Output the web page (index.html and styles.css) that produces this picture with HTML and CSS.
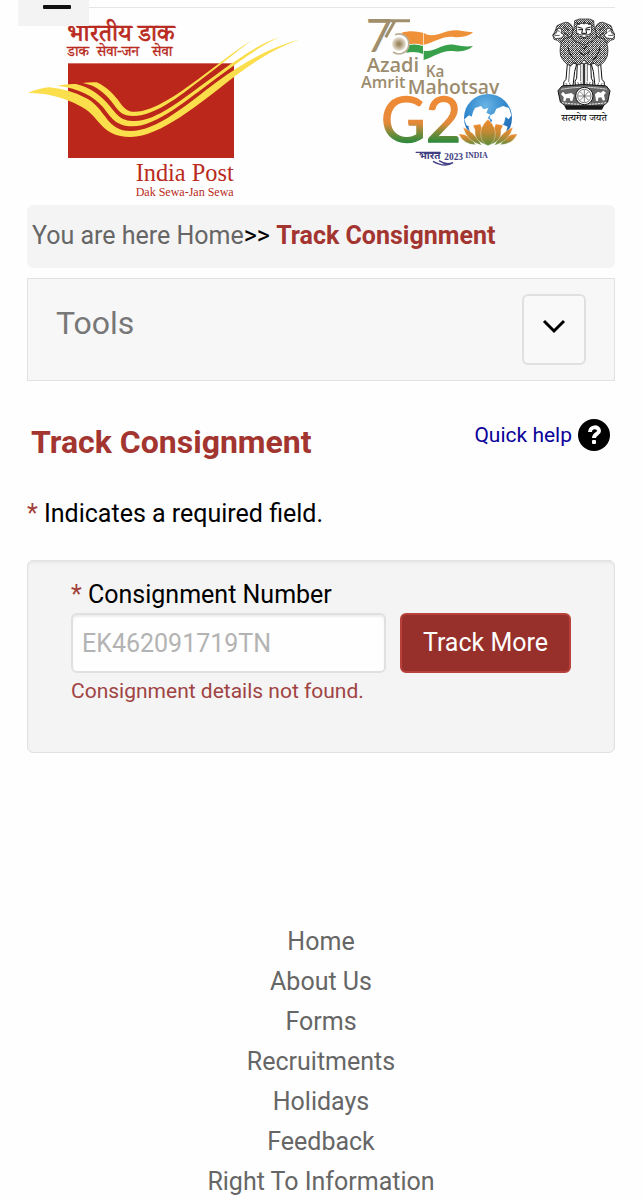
FILE: index.html
```html
<!DOCTYPE html>
<html lang="en">
<head>
<meta charset="utf-8">
<meta name="viewport" content="width=device-width, initial-scale=1">
<title>Track Consignment - India Post</title>
<link rel="stylesheet" href="styles.css">
</head>
<body>
<div class="page">
  <button class="menu-button" type="button" aria-label="Open menu"><span class="menu-bar"></span></button>

  <header class="site-header">
    <a class="logo" href="#" aria-label="India Post">
      <svg class="logo-post" viewBox="81 48 819 552" role="img" aria-label="India Post">
        <g class="deva" fill="#b92a20" stroke="#b92a20">
          <text x="202" y="124" font-size="74" stroke-width="2">भारतीय डाक</text>
          <text x="202" y="169" font-size="44" stroke-width="1">डाक</text>
          <text x="290" y="169" font-size="44" stroke-width="1">सेवा-जन</text>
          <text x="456" y="169" font-size="44" stroke-width="1">सेवा</text>
        </g>
        <rect x="204" y="190" width="498" height="284" fill="#bb271a"/>
        <g fill="#fbde4b">
          <path d="M84 278Q120 264 148 262Q210 268 262 296C318 328 320 393 392 393C470 393 560 314 650 246C740 180 820 140 900 118C820 148 760 186 690 240C600 310 480 411 392 411C300 411 300 346 240 318C190 290 140 280 84 278Z"/>
          <path d="M172 257Q200 251 228 252C270 262 302 286 326 314C350 342 360 363 404 363C470 363 550 294 640 230C720 170 790 126 838 112C780 138 720 182 650 234C560 300 470 379 398 379C346 379 332 350 308 320C280 288 240 266 172 257Z"/>
          <path d="M248 249Q268 246 290 247C320 260 342 284 360 308C376 330 386 335 404 335C462 335 540 278 620 218C680 174 730 134 758 120C720 146 680 180 628 220C550 280 470 348 400 348C368 348 356 334 342 314C318 282 290 256 248 249Z"/>
        </g>
        <g class="serif" fill="#b92a20">
          <text x="407" y="543" font-size="73">India Post</text>
          <text x="407" y="587" font-size="36">Dak Sewa-Jan Sewa</text>
        </g>
      </svg>
    </a>
    <div class="partner-logos">
      <svg class="logo-g20" viewBox="54 48 486 456" role="img" aria-label="Azadi Ka Amrit Mahotsav, G20">
        <defs>
          <linearGradient id="tricolour" gradientUnits="userSpaceOnUse" x1="0" y1="290" x2="0" y2="426">
            <stop offset="0" stop-color="#ef8a35"/><stop offset=".58" stop-color="#e58a3a"/><stop offset=".82" stop-color="#6f8b3a"/><stop offset="1" stop-color="#2f8a3c"/>
          </linearGradient>
          <linearGradient id="petal" x1="0" y1="0" x2="0" y2="1">
            <stop offset="0" stop-color="#f08a2e"/><stop offset=".45" stop-color="#c58a34"/><stop offset="1" stop-color="#5b8b3a"/>
          </linearGradient>
          <radialGradient id="globe" cx=".45" cy=".25" r=".8">
            <stop offset="0" stop-color="#69b4e4"/><stop offset=".55" stop-color="#2e86cc"/><stop offset="1" stop-color="#1d5ea8"/>
          </radialGradient>
          <radialGradient id="hub"><stop offset="0" stop-color="#927d53"/><stop offset=".35" stop-color="#ab9a78"/><stop offset="1" stop-color="#ece6dc"/></radialGradient>
        </defs>
        <text class="lato" x="80" y="157" font-size="137" fill="#a08e6c">7</text>
        <path d="M148 62H213M167 64L140 112" fill="none" stroke="#a08e6c" stroke-width="9"/>
        <path d="M188 98C206 92 230 92 252 98V135C232 130 218 130 206 134Z" fill="#ef9139"/>
        <path d="M206 136Q230 130 252 138V162Q230 152 202 158Z" fill="#38a04b"/>
        <path d="M254 98C286 120 318 86 356 91Q382 95 402 97C388 110 366 113 345 111C310 106 282 130 254 134Z" fill="#ef9139"/>
        <path d="M254 152C286 158 308 130 345 134Q380 142 402 138C388 152 366 157 340 153C310 150 288 168 254 180Z" fill="#38a04b"/>
        <circle cx="180" cy="132" r="31" fill="#fff"/>
        <circle cx="180" cy="132" r="21" fill="url(#hub)"/>
        <path d="M168 104A30 30 0 1 1 162 156" fill="none" stroke="#bbae94" stroke-width="5"/>
        <g class="azadi" fill="#9c8c6e">
          <text x="83" y="216" font-size="60">Azadi</text>
          <text x="260" y="231" font-size="46">Ka</text>
          <text x="66" y="264" font-size="49">Amrit</text>
          <text x="206" y="281" font-size="58">Mahotsav</text>
        </g>
        <text class="lato" x="126" y="425" font-size="184" fill="url(#tricolour)" stroke="url(#tricolour)" stroke-width="4">G2</text>
        <circle cx="447" cy="354" r="72" fill="url(#globe)"/>
        <g fill="#fff">
          <path d="M408 324l18-6 8 10 14-4-6 14 12 6-8 10 8 6-10 14-40 10-22-8-6-18 14-12 8 4 4-14Z"/>
          <path d="M454 346l12-6 6-14 20-8 18 6 7 22-8 12-9-8-5 20-18 14-22-12 5-12-8-6Z"/>
          <path d="M388 380Q447 350 506 380L496 410H398Z"/>
        </g>
        <g fill="url(#petal)" stroke="#fff" stroke-width="1">
          <path d="M359 402Q392 400 410 434Q374 434 359 402Z"/><path d="M535 402Q502 400 484 434Q520 434 535 402Z"/>
          <path d="M372 382Q407 396 428 436Q384 424 372 382Z"/><path d="M522 382Q487 396 466 436Q510 424 522 382Z"/>
          <path d="M402 376L424 372 447 436Q404 426 408 390Z"/><path d="M492 376L470 372 447 436Q490 426 486 390Z"/>
          <path d="M447 358Q474 382 468 410Q464 430 447 437Q430 430 426 410Q420 382 447 358Z"/>
        </g>
        <g fill="#413f83">
          <text class="deva-bold" x="240" y="478" font-size="30">भारत</text>
          <text class="serif-bold" x="316" y="480" font-size="28">2023</text>
          <text class="serif-bold" x="379" y="475" font-size="23">INDIA</text>
        </g>
        <path d="M230 457H305M282 484Q318 504 342 488Q320 496 300 482" fill="none" stroke="#413f83" stroke-width="4"/>
      </svg>
      <svg class="logo-emblem" viewBox="21 18 192 330" role="img" aria-label="National emblem of India">
        <defs>
          <pattern id="fur" width="12" height="12" patternUnits="userSpaceOnUse">
            <rect width="12" height="12" fill="#222"/>
            <path d="M1 2l4 3M7 1l3 4M2 8l4 3M8 7l3 4" stroke="#fff" stroke-width="3" stroke-linecap="round"/>
          </pattern>
          <g id="side-lion">
            <path d="M55 40Q76 30 86 52L94 98 62 112Q48 98 40 91L30 88 26 75 32 66 39 47Z" fill="url(#fur)" stroke="#111" stroke-width="2"/>
            <path d="M42 54l12 4-3 11 9 5-7 10-19 2-6-8 8-8Z" fill="#fff" stroke="#111" stroke-width="2"/>
            <path d="M40 62l7 2M32 77l15-1M58 52q11 0 15 9M60 68q10 2 13 12" fill="none" stroke="#111" stroke-width="2"/>
            <path d="M71 151L66 208Q56 215 59 227H87L92 184 98 163Z" fill="#fff" stroke="#111" stroke-width="3"/>
            <path d="M78 160L74 216M65 219l5 7M76 218l3 8" stroke="#222" stroke-width="2"/>
            <path d="M100 159L98 205Q90 212 94 226H118V160Z" fill="#fff" stroke="#111" stroke-width="3"/>
            <path d="M110 162V214M101 216l4 9M111 216v9" stroke="#222" stroke-width="2"/>
          </g>
        </defs>
        <use href="#side-lion"/>
        <use href="#side-lion" transform="translate(240 0) scale(-1 1)"/>
        <path d="M58 88L90 76H150L182 88Q196 108 190 138Q180 164 160 168L149 158 134 165 120 150 106 165 91 158 80 168Q60 160 50 138Q44 108 58 88Z" fill="url(#fur)" stroke="#111" stroke-width="2"/>
        <path d="M92 32L106 27H136L149 32 151 54 159 78Q148 96 134 99L120 105 106 99Q90 96 82 78L90 54Z" fill="url(#fur)" stroke="#111" stroke-width="2"/>
        <path d="M98 45Q120 34 143 45L142 67 134 84H107L98 67Z" fill="#fff" stroke="#111" stroke-width="2"/>
        <path d="M101 51l14 4M140 51l-14 4M103 59h11M127 59h11M116 56l-3 14h15l-3-14M101 70q12 10 19 1q8 9 20-1M107 79q13 7 27 0M98 39l10 4M142 39l-10 4M120 35v8" fill="none" stroke="#111" stroke-width="3"/>
        <path d="M111 109l9 8 9-8M103 124l17 12 17-12M72 112q6 28 22 38M168 112q-6 28-22 38" fill="none" stroke="#111" stroke-width="3"/>
        <path d="M54 228Q120 219 187 228L198 242 191 276 177 288H65L49 276 42 242Z" fill="#666" stroke="#111" stroke-width="3"/>
        <path d="M52 238Q120 226 189 238M54 278Q120 288 187 278" fill="none" stroke="#eee" stroke-width="3" stroke-dasharray="7 2"/>
        <path d="M57 245l7 8 18-4 8 6-5 18-6-1-2-8-10 1-3 9-6-1 1-12-8-8ZM153 253l9-8 8 3 8-6 8 6-6 7 3 15-6 2-5-10-9 1-1 10-6-1Z" fill="#fff"/>
        <circle cx="121" cy="258" r="26" fill="#fff" stroke="#111" stroke-width="3"/>
        <circle cx="121" cy="258" r="20" fill="none" stroke="#333" stroke-width="2"/>
        <path d="M121 240v36M103 258h36M108 245l26 26M134 245l-26 26" stroke="#444" stroke-width="2"/>
        <path d="M61 287H180L174 299H67Z" fill="#191919"/>
        <text class="deva" x="120" y="334" font-size="30" text-anchor="middle">सत्यमेव जयते</text>
      </svg>
    </div>
  </header>

  <nav class="breadcrumb" aria-label="Breadcrumb">
    <a class="crumb" href="#">You are here Home</a><span>&gt;&gt; </span><strong class="crumb-current">Track Consignment</strong>
  </nav>

  <section class="tools">
    <h2 class="tools-title">Tools</h2>
    <button class="tools-toggle" type="button" aria-label="Expand tools">
      <svg class="chevron" viewBox="0 0 24 16" aria-hidden="true"><path d="M2 2L12 12L22 2" fill="none" stroke="#000" stroke-width="3"/></svg>
    </button>
  </section>

  <main>
    <div class="title-row">
      <h1 class="title">Track Consignment</h1>
      <a class="help" href="#">Quick help
        <svg class="help-icon" viewBox="0 0 32 32" aria-hidden="true">
          <circle cx="16" cy="16" r="16" fill="#000"/>
          <path d="M12 13C12 7 21 7 21 12C21 15 16 15 16 19" fill="none" stroke="#fff" stroke-width="4"/>
          <rect x="14" y="21" width="4" height="4" rx="1" fill="#fff"/>
        </svg>
      </a>
    </div>
    <p class="required-note"><span class="star">*</span> Indicates a required field.</p>

    <form class="track-form">
      <label class="track-label" for="consignment"><span class="star">*</span> Consignment Number</label>
      <div class="track-row">
        <input class="track-input" id="consignment" type="text" placeholder="EK462091719TN">
        <button class="track-button" type="button">Track More</button>
      </div>
      <p class="track-error">Consignment details not found.</p>
    </form>
  </main>

  <footer class="footer">
    <a href="#">Home</a>
    <a href="#">About Us</a>
    <a href="#">Forms</a>
    <a href="#">Recruitments</a>
    <a href="#">Holidays</a>
    <a href="#">Feedback</a>
    <a href="#">Right To Information</a>
  </footer>
</div>
</body>
</html>
```
FILE: styles.css
```css
* { box-sizing: border-box; }

body {
  margin: 0;
  background: #fefefe;
  color: #000;
  font: 25px/40px Roboto, sans-serif;
}

h1, h2, p { margin: 0; font-weight: 400; }
a { color: inherit; text-decoration: none; }
button, input { font: inherit; }

.page { position: relative; padding: 7px 27px 0; }

.menu-button {
  position: absolute;
  top: 0;
  left: 18px;
  width: 71px;
  height: 26px;
  padding: 5px 0 0;
  border: 0;
  background: #f3f3f3;
  display: flex;
  justify-content: center;
  align-items: flex-start;
}
.menu-bar { width: 28px; height: 4px; margin-left: 6px; border-radius: 1px; background: #111; }

.site-header {
  display: flex;
  justify-content: space-between;
  align-items: flex-start;
  padding: 8px 0 5px;
  border-top: 1px solid #e6e6e6;
}
.logo { display: block; }
.partner-logos { display: flex; align-items: flex-start; gap: 32px; }
.logo-post { display: block; width: 273px; height: 184px; }
.logo-g20 { display: block; width: 162px; height: 152px; }
.logo-emblem { display: block; width: 64px; height: 110px; }
.deva { font-family: "Noto Serif Devanagari", "Noto Sans Devanagari", "Noto Sans", serif; }
.deva-bold { font-family: "Noto Sans Devanagari", "Noto Sans", sans-serif; font-weight: 700; }
.serif { font-family: "Liberation Serif", serif; }
.serif-bold { font-family: "Liberation Serif", serif; font-weight: 700; }
.lato { font-family: Lato, sans-serif; }
.azadi { font-family: "Open Sans", sans-serif; font-weight: 600; }

.breadcrumb {
  padding: 11px 5px 12px;
  border-radius: 6px;
  background: #f4f4f4;
}
.crumb { color: #666; }
.crumb-current { color: #a33530; font-weight: 700; }

.tools {
  display: flex;
  justify-content: space-between;
  align-items: flex-start;
  margin-top: 10px;
  padding: 15px 28px;
  border: 1px solid #e2e2e2;
  background: #f7f7f7;
}
.tools-title { padding-top: 9px; font-size: 32px; color: #777; }
.tools-toggle {
  display: flex;
  align-items: center;
  justify-content: center;
  width: 64px;
  height: 71px;
  padding: 0 0 6px;
  border: 2px solid #e0e0e0;
  border-radius: 6px;
  background: #f9f9f9;
}
.chevron { width: 24px; height: 16px; }

.title-row {
  display: flex;
  justify-content: space-between;
  align-items: flex-start;
  margin-top: 37px;
  padding: 0 5px 0 4px;
}
.title { padding-top: 4px; font-size: 32px; font-weight: 700; color: #a33530; }
.help { display: flex; align-items: center; gap: 6px; line-height: 34px; font-size: 21px; color: #0a0099; }
.help-icon { width: 32px; height: 32px; }

.required-note { margin-top: 32px; }
.star { color: #a33f3a; }

.track-form {
  margin-top: 26px;
  padding: 14px 43px 43px;
  border: 1px solid #e1e1e1;
  border-radius: 6px;
  background: #f4f4f4;
  box-shadow: inset 0 2px 2px #e8e8e8;
}
.track-label { display: block; }
.track-row { display: flex; gap: 14px; margin-top: -2px; }
.track-input {
  flex: 1;
  min-width: 0;
  height: 60px;
  padding: 0 9px;
  border: 2px solid #e0e0e0;
  border-radius: 6px;
  background: #fefefe;
  color: #333;
  box-shadow: inset 0 2px 2px #eee;
}
.track-input::placeholder { color: #b3b3b3; opacity: 1; }
.track-button {
  height: 60px;
  padding: 0 21px;
  border: 2px solid #b8413b;
  border-radius: 6px;
  background: #97302a;
  color: #fff;
}
.track-error { font-size: 21px; line-height: 36px; color: #a04343; }

.footer {
  display: flex;
  flex-direction: column;
  align-items: center;
  margin-top: 169px;
  color: #666;
}
```
